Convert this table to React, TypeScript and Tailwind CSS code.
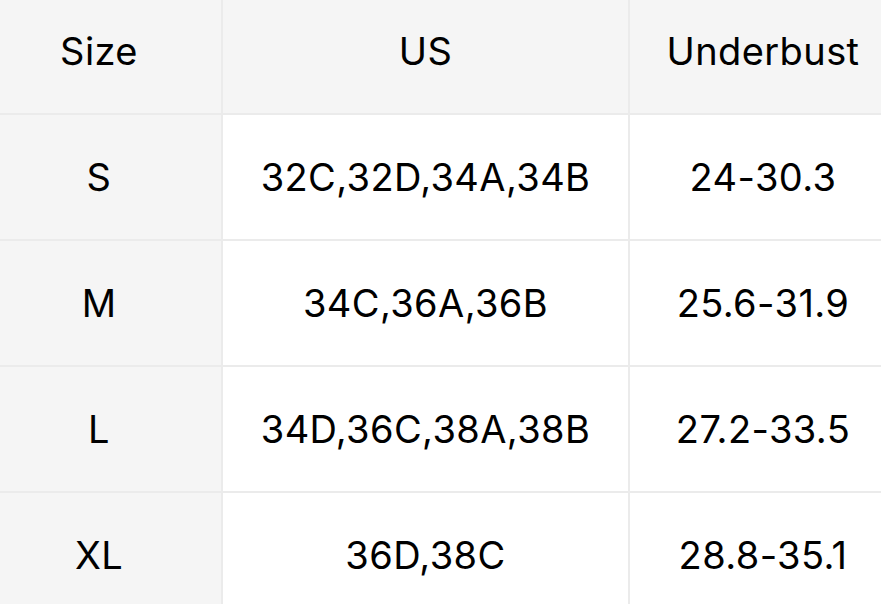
import React from "react";

const rows: [string, string, string][] = [
  ["S", "32C,32D,34A,34B", "24-30.3"],
  ["M", "34C,36A,36B", "25.6-31.9"],
  ["L", "34D,36C,38A,38B", "27.2-33.5"],
  ["XL", "36D,38C", "28.8-35.1"],
];

export default function App() {
  const cell = "flex items-center justify-center h-[126px] border-b-2 border-r-2 border-[#ebebeb]";
  return (
    <div className="w-[881px] h-[604px] overflow-hidden bg-white text-black" style={{ fontFamily: "Inter, 'Liberation Sans', sans-serif" }}>
      <div className="grid grid-cols-[246px_407px_268px] -ml-[23px] -mt-[11px] text-[38px] tracking-[0.4px] w-[921px]">
        <div className={`${cell} bg-[#f5f5f5]`}>Size</div>
        <div className={`${cell} bg-[#f5f5f5]`}>US</div>
        <div className={`${cell} bg-[#f5f5f5]`}>Underbust</div>
        {rows.map((r) => (
          <React.Fragment key={r[0]}>
            <div className={`${cell} bg-[#f5f5f5]`}>{r[0]}</div>
            <div className={`${cell} bg-white`}>{r[1]}</div>
            <div className={`${cell} bg-white`}>{r[2]}</div>
          </React.Fragment>
        ))}
      </div>
    </div>
  );
}
